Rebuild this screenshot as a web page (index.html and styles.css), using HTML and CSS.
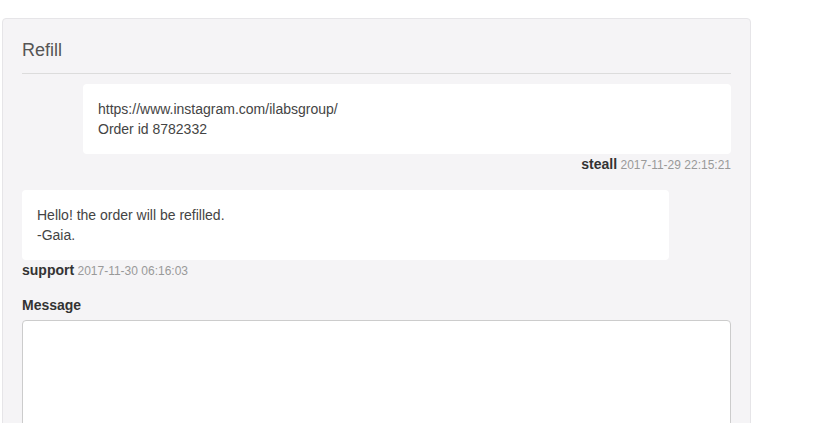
FILE: index.html
```html
<!DOCTYPE html>
<html>
<head>
<meta charset="utf-8">
<link rel="stylesheet" href="styles.css">
</head>
<body>
<div class="panel">
  <div class="panel-head">Refill</div>
  <div class="thread">
    <div class="msg msg-right">
      <div class="bubble">https://www.instagram.com/ilabsgroup/<br>Order id 8782332</div>
      <div class="meta"><b>steall</b> <span class="date">2017-11-29 22:15:21</span></div>
    </div>
    <div class="msg msg-left">
      <div class="bubble">Hello! the order will be refilled.<br>-Gaia.</div>
      <div class="meta"><b>support</b> <span class="date">2017-11-30 06:16:03</span></div>
    </div>
  </div>
  <label class="label">Message</label>
  <textarea class="input"></textarea>
</div>
</body>
</html>
```
FILE: styles.css
```css
html, body {
  margin: 0;
  padding: 0;
  background: #fff;
  font-family: "Liberation Sans", Arial, sans-serif;
  color: #333;
}
.panel {
  margin: 18px 0 0 2px;
  width: 709px;
  padding: 0 19px 20px;
  background: #f5f4f6;
  border: 1px solid #e6e5e8;
  border-radius: 4px;
}
.panel-head {
  padding: 21px 0 0;
  height: 33px;
  font-size: 18px;
  color: #555;
  border-bottom: 1px solid #dcdcdc;
}
.thread {
  padding-top: 10px;
  display: flex;
  flex-direction: column;
}
.msg {
  display: flex;
  flex-direction: column;
}
.msg-right { align-items: flex-end; }
.msg-left { align-items: flex-start; margin-top: 17px; }
.bubble {
  box-sizing: border-box;
  width: 648px;
  height: 70px;
  background: #fff;
  border-radius: 4px;
  padding: 15px 15px;
  font-size: 14px;
  line-height: 20px;
  color: #444;
}
.msg-left .bubble { width: 647px; }
.meta {
  margin-top: 2px;
  font-size: 12px;
  line-height: 16px;
}
.meta b { color: #333; font-size: 14px; }
.date { color: #999; font-size: 12px; }
.label {
  display: block;
  margin-top: 18px;
  font-size: 14px;
  font-weight: bold;
  color: #333;
}
.input {
  display: block;
  box-sizing: border-box;
  margin-top: 7px;
  width: 709px;
  height: 140px;
  border: 1px solid #ccc;
  border-radius: 4px;
  background: #fff;
  resize: none;
}
```
